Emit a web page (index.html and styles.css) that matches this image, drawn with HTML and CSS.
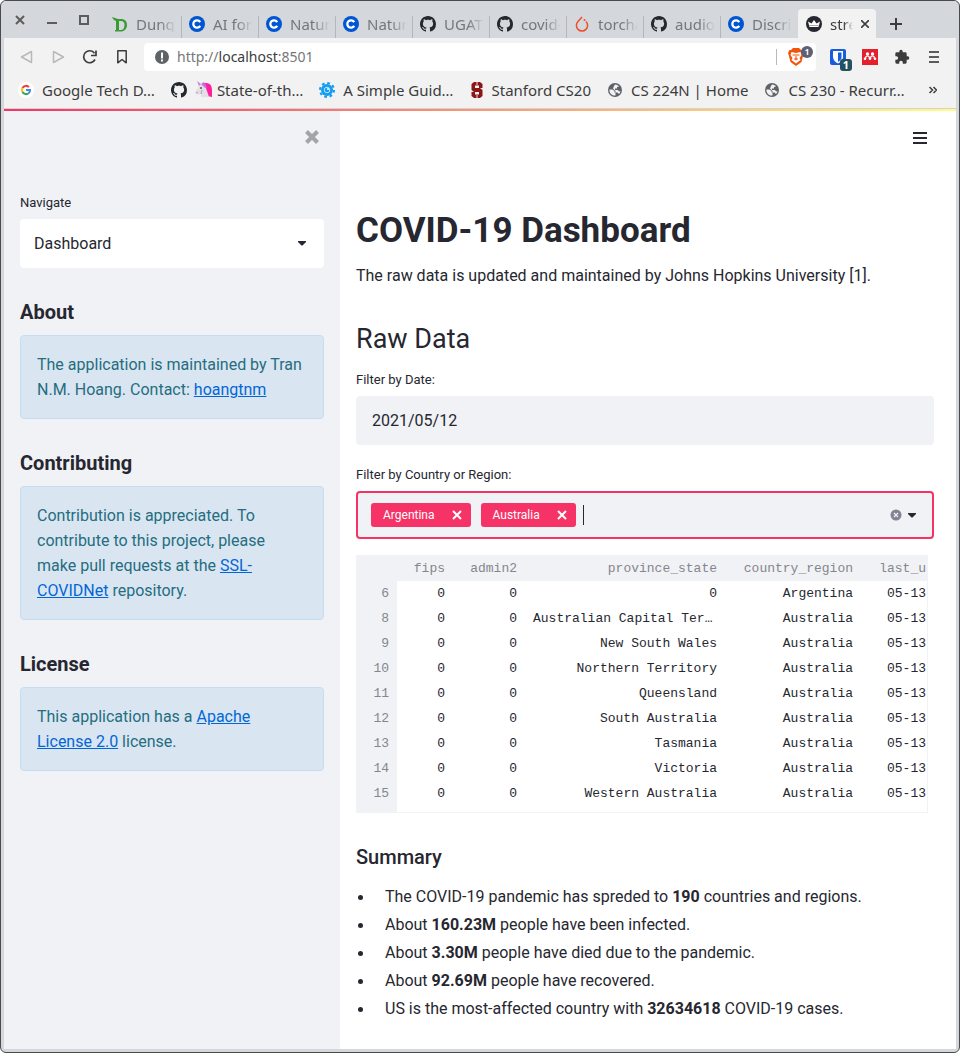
FILE: index.html
```html
<!DOCTYPE html>
<html lang="en">
<head>
<meta charset="utf-8">
<title>COVID-19 Dashboard</title>
<link rel="stylesheet" href="styles.css">
</head>
<body>
<svg class="defs" aria-hidden="true">
  <symbol id="coursera" viewBox="0 0 16 16"><circle cx="8" cy="8" r="8" fill="#0056d2"/><path d="M11.2 6.1A3.7 3.7 0 1 0 11.2 9.9" fill="none" stroke="#fff" stroke-width="2.3"/></symbol>
  <symbol id="github" viewBox="0 0 16 16"><path fill="#24292e" d="M8 0C3.58 0 0 3.58 0 8c0 3.54 2.29 6.53 5.47 7.59.4.07.55-.17.55-.38 0-.19-.01-.82-.01-1.49-2.01.37-2.53-.49-2.69-.94-.09-.23-.48-.94-.82-1.13-.28-.15-.68-.52-.01-.53.63-.01 1.08.58 1.23.82.72 1.21 1.87.87 2.33.66.07-.52.28-.87.51-1.07-1.78-.2-3.64-.89-3.64-3.95 0-.87.31-1.59.82-2.15-.08-.2-.36-1.02.08-2.12 0 0 .67-.21 2.2.82.64-.18 1.32-.27 2-.27s1.36.09 2 .27c1.53-1.04 2.2-.82 2.2-.82.44 1.1.16 1.92.08 2.12.51.56.82 1.27.82 2.15 0 3.07-1.87 3.75-3.65 3.95.29.25.54.73.54 1.48 0 1.07-.01 1.93-.01 2.2 0 .21.15.46.55.38A8.01 8.01 0 0 0 16 8c0-4.42-3.58-8-8-8z"/></symbol>
  <symbol id="globe" viewBox="0 0 16 16"><circle cx="8" cy="8" r="7" fill="#5f6368"/><path d="M2.500 7.500H5.500L7.500 9v1.500h1v3C5 14 2 11 2.500 7.500zM8 2.500c2 0 3.500 1 4 2L10 5v1.500H8V8h3l1 1.500 1.500-.5c-.3 1.500-1 2.500-1.500 3l-1.500-1.500H8.500V9L6 6.500l1-2.500z" fill="#f2f2f2"/></symbol>
  <symbol id="caret" viewBox="0 0 8 5"><path d="M0 0h8v1L4.500 4.500h-1L0 1z" fill="#262730"/></symbol>
</svg>
<div class="window">
  <header class="chrome">
    <div class="tabstrip">
      <div class="wincontrols">
        <button aria-label="Close window"><svg width="10" height="10" viewBox="0 0 10 10"><path d="M1 1l8 8M9 1L1 9" stroke="#5c5c5c" stroke-width="2"/></svg></button>
        <button aria-label="Minimize"><svg width="10" height="10" viewBox="0 0 10 10"><path d="M0 8h10" stroke="#5c5c5c" stroke-width="2"/></svg></button>
        <button aria-label="Maximize"><svg width="10" height="10" viewBox="0 0 10 10"><path d="M1 1h8v8H1z" fill="none" stroke="#5c5c5c" stroke-width="2"/></svg></button>
      </div>
      <nav class="tabs">
        <a class="tab" href="#"><svg width="16" height="16" viewBox="0 0 16 16"><path d="M0 1c2 1 4 1 6 2h3c4 0 6 2.500 6 6 0 4-3 6.500-6 6.500H3V14h1V5C2 4.500 1 3 0 1zM7 5v9h2c2 0 3.500-2 3.500-5S11 5 9 5z" fill="#3c9a35" fill-rule="evenodd"/></svg><span>Dungno</span></a>
        <a class="tab" href="#"><svg width="16" height="16"><use href="#coursera"/></svg><span>AI for M</span></a>
        <a class="tab" href="#"><svg width="16" height="16"><use href="#coursera"/></svg><span>Natural</span></a>
        <a class="tab" href="#"><svg width="16" height="16"><use href="#coursera"/></svg><span>Natural</span></a>
        <a class="tab" href="#"><svg width="16" height="16"><use href="#github"/></svg><span>UGATIT</span></a>
        <a class="tab" href="#"><svg width="16" height="16"><use href="#github"/></svg><span>covid-1</span></a>
        <a class="tab" href="#"><svg width="16" height="16" viewBox="0 0 16 16"><path d="M8 1L4 5.500a5.600 5.600 0 1 0 8 0" fill="none" stroke="#ee4c2c" stroke-width="1.500"/><circle cx="10.500" cy="4" r="1" fill="#ee4c2c"/></svg><span>torchau</span></a>
        <a class="tab" href="#"><svg width="16" height="16"><use href="#github"/></svg><span>audio/t</span></a>
        <a class="tab" href="#"><svg width="16" height="16"><use href="#coursera"/></svg><span>Discrim</span></a>
        <a class="tab active" href="#"><svg width="16" height="16" viewBox="0 0 16 16"><circle cx="8" cy="8" r="8" fill="#262730"/><path d="M2 5.500l3.500 2L8 4l2.500 3.500 3.500-2-1.500 5.500h-9z" fill="#fff"/><path d="M3.300 9.500h9.400" stroke="#aaa"/></svg><span>strea</span><svg width="8" height="8" viewBox="0 0 8 8"><path d="M0 0l8 8M8 0L0 8" stroke="#3c4043" stroke-width="1.600"/></svg></a>
      </nav>
      <button class="newtab" aria-label="New tab"><svg width="12" height="12" viewBox="0 0 12 12"><path d="M6 0v12M0 6h12" stroke="#3c3c3c" stroke-width="2"/></svg></button>
    </div>
    <div class="toolbar">
      <div class="navbuttons">
        <button aria-label="Back"><svg width="16" height="16" viewBox="0 0 16 16"><path d="M13.500 2.500v11L3.500 8z" fill="none" stroke="#b9b9b9" stroke-width="1.500" stroke-linejoin="round"/></svg></button>
        <button aria-label="Forward"><svg width="16" height="16" viewBox="0 0 16 16"><path d="M3.500 2.500v11l10-5.500z" fill="none" stroke="#b9b9b9" stroke-width="1.500" stroke-linejoin="round"/></svg></button>
        <button aria-label="Reload"><svg width="16" height="16" viewBox="0 0 16 16"><path d="M13 10.500A6 6 0 1 1 12.500 4.200M14 1.500v5H9" fill="none" stroke="#3c3c3c" stroke-width="1.700"/></svg></button>
        <button aria-label="Bookmark"><svg width="16" height="16" viewBox="0 0 16 16"><path d="M3.800 1.800h8.400v12L8 10.500l-4.200 3.300z" fill="none" stroke="#3c3c3c" stroke-width="1.500" stroke-linejoin="round"/></svg></button>
      </div>
      <div class="address">
        <svg width="14" height="14" viewBox="0 0 14 14"><circle cx="7" cy="7" r="7" fill="#5f6368"/><path d="M7 2.500v6M7 9.500v2" stroke="#fff" stroke-width="2"/></svg>
        <div class="url">http://<b>localhost</b>:8501</div>
        <i class="divider"></i>
        <span class="badged shield"><svg width="16" height="18" viewBox="0 0 16 18"><path d="M5 0h6l2 2h1.500L16 5l-1 3-1.500 6L8 18l-5.500-4L1 8 0 5l1.500-3H3z" fill="#f4530a"/><path d="M3.500 4L8 5l4.500-1 1 3-2 3 1 2L8 15.500 3.500 12l1-2-2-3z" fill="#fff"/><path d="M4.500 7h2.500M9 7h2.500M8 6v4l-1.500 1 1.500 1 1.500-1L8 10" fill="none" stroke="#f4530a"/></svg><em class="round">1</em></span>
      </div>
      <div class="extensions">
        <span class="badged"><svg width="16" height="16" viewBox="0 0 16 16"><rect width="16" height="16" rx="2" fill="#175ddc"/><path d="M3 2h10v6c0 3-2 5-5 6.500C5 13 3 11 3 8z" fill="#fff"/><path d="M8 3.500h3.500V8c0 2-1 3.500-3.500 5z" fill="#175ddc"/></svg><em class="square">1</em></span>
        <svg width="16" height="16" viewBox="0 0 16 16"><rect width="16" height="16" fill="#e5202e"/><g fill="#fff"><circle cx="5.500" cy="5" r="1.700"/><circle cx="10.500" cy="5" r="1.700"/><circle cx="3" cy="9.800" r="1.300"/><circle cx="13" cy="9.800" r="1.300"/><circle cx="8" cy="9.800" r="1.300"/></g><path d="M3.500 9.500c0-2 1-2.500 2-2.500s2 .5 2 2.500M8.500 9.500c0-2 1-2.500 2-2.500s2 .5 2 2.500" fill="none" stroke="#fff" stroke-width="1.200"/></svg>
        <svg width="16" height="16" viewBox="0 0 24 24"><path fill="#3c3c3c" d="M20.500 11H19V7a2 2 0 0 0-2-2h-4V3.500a2.500 2.500 0 0 0-5 0V5H4a2 2 0 0 0-2 2v3.800h1.500a2.700 2.700 0 0 1 0 5.400H2V20a2 2 0 0 0 2 2h3.800v-1.500a2.700 2.700 0 0 1 5.400 0V22H17a2 2 0 0 0 2-2v-4h1.500a2.500 2.500 0 0 0 0-5z"/></svg>
        <svg class="menu" width="10" height="12" viewBox="0 0 10 12"><path d="M0 1h10M0 6h10M0 11h10" stroke="#5c5c5c" stroke-width="2"/></svg>
      </div>
    </div>
    <nav class="bookmarks">
      <a href="#"><svg width="16" height="16" viewBox="0 0 16 16"><circle cx="8" cy="8" r="8" fill="#fff"/><g fill="none" stroke-width="2"><path d="M11 5.200A4 4 0 0 0 4.500 6" stroke="#ea4335"/><path d="M4.500 6a4 4 0 0 0 0 4" stroke="#fbbc05"/><path d="M4.500 10a4 4 0 0 0 6.300 1" stroke="#34a853"/><path d="M10.800 11A4 4 0 0 0 12 8H8" stroke="#4285f4"/></g></svg>Google Tech D…</a>
      <a href="#" aria-label="GitHub"><svg width="16" height="16"><use href="#github"/></svg></a>
      <a href="#" class="tight"><svg width="18" height="18" viewBox="0 0 18 18"><path d="M8 2h3c5 0 6 4 6 8v6l-5-1z" fill="#ff1f9c"/><path d="M4 4l3-1 3 2 2 5 2 6H6v-3l-4 1-2-2 3-5z" fill="#e4dfe6"/><path d="M4 5L2 0l4 3" fill="#b78be0"/><path d="M6 3l3-2 2 3 1 4-3-2z" fill="#d06be0"/><path d="M6 13l1-4M1 11l2 1" stroke="#a79fb0" fill="none"/><circle cx="6" cy="7" r="1" fill="#555"/></svg>State-of-th…</a>
      <a href="#"><svg width="16" height="16" viewBox="0 0 16 16"><circle cx="8" cy="8" r="7" fill="none" stroke="#109cf1" stroke-width="2" stroke-dasharray="2.750 2.750"/><circle cx="8" cy="8" r="6" fill="#109cf1"/><circle cx="8" cy="8" r="2.800" fill="none" stroke="#bfe4fc"/><circle cx="9" cy="7" r="1" fill="#fff"/></svg>A Simple Guid…</a>
      <a href="#"><svg width="14" height="16" viewBox="0 0 14 16"><path d="M4 0h6l2.500 2v4H9V3.500H5V6h5l2.500 2v6L10 16H4l-2.500-2v-4H5v2.500h4V10H4L1.500 8V2z" fill="#8c1515"/><path d="M7 0v3M7 13v3" stroke="#f6dada"/></svg>Stanford CS20</a>
      <a href="#"><svg width="16" height="16"><use href="#globe"/></svg>CS 224N | Home</a>
      <a href="#"><svg width="16" height="16"><use href="#globe"/></svg>CS 230 - Recurr…</a>
      <button aria-label="More bookmarks"><svg width="8" height="8" viewBox="0 0 8 8"><path d="M.5 1L3.500 4l-3 3M4.500 1l3 3-3 3" fill="none" stroke="#3c3c3c" stroke-width="1.500"/></svg></button>
    </nav>
  </header>
  <div class="decoration"></div>
  <div class="app">
    <aside class="sidebar">
      <div class="sidebar-top"><button aria-label="Close sidebar"><svg width="14" height="14" viewBox="0 0 14 14"><path d="M1.500 1.500l11 11M12.500 1.500l-11 11" stroke="#a3a4a8" stroke-width="4"/></svg></button></div>
      <label for="navigate">Navigate</label>
      <div class="selectbox">
        <select id="navigate"><option>Dashboard</option></select>
        <svg width="8" height="5"><use href="#caret"/></svg>
      </div>
      <h3>About</h3>
      <p class="info">The application is maintained by Tran N.M. Hoang. Contact: <a href="#">hoangtnm</a></p>
      <h3>Contributing</h3>
      <p class="info">Contribution is appreciated. To contribute to this project, please make pull requests at the <a href="#">SSL-COVIDNet</a> repository.</p>
      <h3>License</h3>
      <p class="info">This application has a <a href="#">Apache License 2.0</a> license.</p>
    </aside>
    <main class="main">
      <div class="main-top"><button aria-label="Menu"><svg width="14" height="12" viewBox="0 0 14 12"><path d="M0 1h14M0 6h14M0 11h14" stroke="#262730" stroke-width="2"/></svg></button></div>
      <h1>COVID-19 Dashboard</h1>
      <p>The raw data is updated and maintained by Johns Hopkins University [1].</p>
      <h2>Raw Data</h2>
      <label for="date">Filter by Date:</label>
      <input class="date" id="date" type="text" value="2021/05/12">
      <label for="region">Filter by Country or Region:</label>
      <div class="multiselect">
        <span class="tag">Argentina<button aria-label="Remove Argentina"><svg width="10" height="10" viewBox="0 0 10 10"><path d="M1 1l8 8M9 1L1 9" stroke="#fff" stroke-width="2"/></svg></button></span>
        <span class="tag">Australia<button aria-label="Remove Australia"><svg width="10" height="10" viewBox="0 0 10 10"><path d="M1 1l8 8M9 1L1 9" stroke="#fff" stroke-width="2"/></svg></button></span>
        <i class="cursor"></i>
        <input id="region" type="text">
        <button aria-label="Clear all"><svg width="12" height="12" viewBox="0 0 12 12"><circle cx="6" cy="6" r="5.500" fill="#808495"/><path d="M4 4l4 4M8 4L4 8" stroke="#f0f2f6" stroke-width="1.200"/></svg></button>
        <svg width="8" height="5"><use href="#caret"/></svg>
      </div>
      <div class="frame">
        <table>
          <colgroup><col class="c-index"><col class="c-fips"><col class="c-admin"><col class="c-state"><col class="c-country"><col></colgroup>
          <thead><tr><th></th><th>fips</th><th>admin2</th><th>province_state</th><th>country_region</th><th>last_u</th></tr></thead>
          <tbody>
            <tr><th>6</th><td>0</td><td>0</td><td>0</td><td>Argentina</td><td>05-13</td></tr>
            <tr><th>8</th><td>0</td><td>0</td><td>Australian Capital Territory</td><td>Australia</td><td>05-13</td></tr>
            <tr><th>9</th><td>0</td><td>0</td><td>New South Wales</td><td>Australia</td><td>05-13</td></tr>
            <tr><th>10</th><td>0</td><td>0</td><td>Northern Territory</td><td>Australia</td><td>05-13</td></tr>
            <tr><th>11</th><td>0</td><td>0</td><td>Queensland</td><td>Australia</td><td>05-13</td></tr>
            <tr><th>12</th><td>0</td><td>0</td><td>South Australia</td><td>Australia</td><td>05-13</td></tr>
            <tr><th>13</th><td>0</td><td>0</td><td>Tasmania</td><td>Australia</td><td>05-13</td></tr>
            <tr><th>14</th><td>0</td><td>0</td><td>Victoria</td><td>Australia</td><td>05-13</td></tr>
            <tr><th>15</th><td>0</td><td>0</td><td>Western Australia</td><td>Australia</td><td>05-13</td></tr>
          </tbody>
        </table>
      </div>
      <h3>Summary</h3>
      <ul>
        <li><span>The COVID-19 pandemic has spreded to <b>190</b> countries and regions.</span></li>
        <li><span>About <b>160.23M</b> people have been infected.</span></li>
        <li><span>About <b>3.30M</b> people have died due to the pandemic.</span></li>
        <li><span>About <b>92.69M</b> people have recovered.</span></li>
        <li><span>US is the most-affected country with <b>32634618</b> COVID-19 cases.</span></li>
      </ul>
    </main>
  </div>
</div>
</body>
</html>
```
FILE: styles.css
```css
* { box-sizing: border-box; }
body { margin: 0; background: #fff; color: #262730; font: 16px/26px Roboto, "Liberation Sans", sans-serif; }
button { border: 0; padding: 0; background: none; display: flex; cursor: pointer; }
svg { display: block; flex: none; }
.defs { width: 0; height: 0; position: absolute; }

.window { min-height: 100vh; display: flex; flex-direction: column; border: 1px solid #4a4a4c; border-radius: 6px; padding: 0 3px 3px; background: #d4d8dc; }

/* Browser chrome */
.chrome { color: #3c3c3c; font: 15px/20px "Noto Sans", "Open Sans", sans-serif; border-bottom: 1px solid #cfd2d6; background: #f2f2f2; }
.tabstrip { display: flex; align-items: flex-end; height: 37px; background: #d4d8dc; }
.wincontrols { display: flex; gap: 22px; width: 101px; padding: 0 0 13px 11px; }
.tabs { display: flex; align-items: flex-end; }
.tab { display: flex; align-items: flex-start; gap: 8px; width: 77px; height: 22px; padding: 0 5px 0 7px; border-right: 1px solid #b3b6ba; color: #75777a; text-decoration: none; }
.tab span { flex: 1; overflow: hidden; white-space: nowrap; line-height: 16px; mask-image: linear-gradient(90deg, #000 60%, transparent); }
.tab:nth-last-child(2) { border-color: transparent; }
.tab.active { height: 29px; width: 78px; padding: 7px 7px 0 8px; border: 0; border-radius: 4px 4px 0 0; background: #f2f2f2; color: #3c3c3c; }
.tab.active svg:last-child { margin-top: 4px; }
.newtab { padding: 0 0 8px 14px; }
.toolbar { display: flex; align-items: center; height: 38px; padding-right: 17px; }
.navbuttons { display: flex; gap: 16px; width: 140px; padding-left: 14px; }
.address { flex: 1; display: flex; align-items: center; height: 28px; padding: 0 12px 0 11px; border-radius: 4px; background: #fff; }
.url { flex: 1; margin-left: 8px; color: #75777a; font-size: 14px; }
.url b { font-weight: 400; color: #3c3c3c; }
.divider { width: 1px; height: 16px; margin-right: 11px; background: #b9b9b9; }
.badged { position: relative; }
.badged em { position: absolute; color: #fff; text-align: center; font-style: normal; font-weight: 700; }
.round { top: -2px; right: -9px; width: 12px; height: 12px; border-radius: 6px; background: #5e6175; font-size: 8px; line-height: 12px; }
.square { top: 10px; right: -6px; width: 12px; height: 12px; border-radius: 3px; background: #23515f; font-size: 11px; line-height: 12px; }
.extensions { display: flex; align-items: center; gap: 16px; padding-left: 14px; }
.menu { margin-left: 3px; }
.bookmarks { display: flex; align-items: center; gap: 16px; height: 32px; padding: 0 19px 4px 14px; }
.bookmarks a { display: flex; align-items: center; gap: 8px; color: inherit; text-decoration: none; white-space: nowrap; }
.bookmarks .tight { gap: 4px; margin-left: -8px; }
.bookmarks button { margin-left: auto; }

.decoration { height: 2px; background: linear-gradient(90deg, #f63366, #fffd80); }

/* Application */
.app { flex: 1; display: flex; background: #fff; }
.sidebar { flex: none; width: 336px; padding: 0 16px; background: #f0f2f6; }
.sidebar-top { display: flex; justify-content: flex-end; height: 82px; padding: 19px 5px 0 0; }
label { display: block; margin-bottom: 6px; font-size: 13px; line-height: 20px; }
h1, h2, h3, p, ul { margin: 0; }
h3 { margin: 29px 0 8px; font-size: 20px; line-height: 30px; }
.selectbox { position: relative; display: flex; align-items: center; }
.selectbox select { flex: 1; height: 49px; padding: 0 14px; border: 0; border-radius: 4px; background: #fff; color: inherit; font: inherit; appearance: none; }
.selectbox svg { position: absolute; right: 18px; }
.info { padding: 16px; border: 1px solid #c6dcf3; border-radius: 4px; background: #d9e6f2; color: #256d7f; line-height: 25px; }
.info a { color: #0366d6; }
.main { flex: 1; min-width: 0; padding: 0 22px 26px 16px; }
.main-top { display: flex; justify-content: flex-end; height: 100px; padding: 21px 7px 0 0; }
h1 { margin-bottom: 12px; font-size: 35px; line-height: 40px; }
h2 { margin: 33px 0 14px; font-size: 27px; line-height: 34px; font-weight: 400; }
.date { display: block; width: 100%; height: 49px; margin-bottom: 20px; padding: 0 16px; border: 0; border-radius: 4px; background: #f0f2f6; color: inherit; font: inherit; }
.multiselect { display: flex; align-items: center; height: 48px; padding: 0 16px 0 13px; border: 2px solid #f63366; border-radius: 4px; background: #f0f2f6; }
.tag { display: flex; align-items: center; gap: 17px; height: 24px; margin-right: 10px; padding: 0 9px 0 12px; border-radius: 3px; background: #f63366; color: #fff; font-size: 12px; }
.cursor { width: 1px; height: 20px; margin-left: -3px; background: #262730; }
.multiselect input { flex: 1; min-width: 0; border: 0; outline: 0; background: none; font: inherit; }
.multiselect > svg { margin-left: 6px; }
.frame { margin: 16px 6px 0 0; border: solid #f0f2f6; border-width: 0 1px 1px 0; overflow: hidden; }
table { width: 100%; table-layout: fixed; border-collapse: collapse; font: 13px/24px "Liberation Mono", monospace; }
.c-index { width: 41px; }
.c-fips { width: 56px; }
.c-admin { width: 72px; }
.c-state { width: 200px; }
.c-country { width: 136px; }
th, td { padding: 1px 8px 0; text-align: right; white-space: nowrap; overflow: hidden; text-overflow: ellipsis; }
th { background: #f0f2f6; color: #85868c; font-weight: 400; }
thead th { height: 26px; }
th:last-child, td:last-child { padding-left: 0; padding-right: 1px; text-overflow: clip; }
tbody tr:last-child > * { padding-bottom: 6px; }
.main h3 { font-weight: 500; margin-bottom: 11px; }
ul { padding: 0; list-style: none; line-height: 28px; }
li { display: flex; align-items: center; gap: 22px; padding-left: 2px; }
li::before { content: ""; flex: none; width: 5px; height: 5px; border-radius: 50%; background: #262730; }
```
